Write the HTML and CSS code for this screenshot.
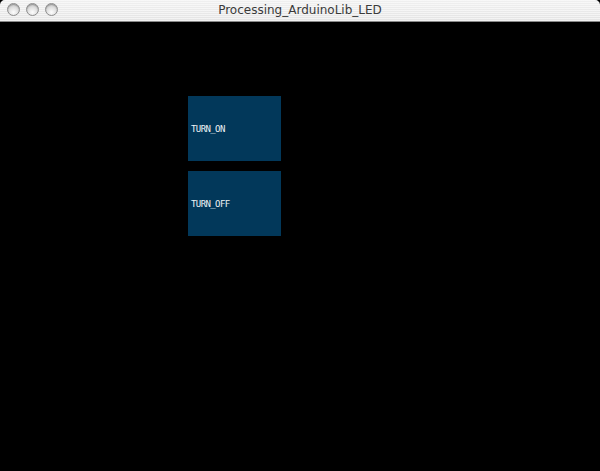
FILE: index.html
```html
<!DOCTYPE html>
<html>
<head>
<meta charset="utf-8">
<link rel="stylesheet" href="styles.css">
</head>
<body>
<div class="window">
  <div class="titlebar">
    <div class="lights">
      <span class="light"></span>
      <span class="light"></span>
      <span class="light"></span>
    </div>
    <div class="title">Processing_ArduinoLib_LED</div>
  </div>
  <div class="canvas">
    <div class="btn"><span class="label">TURN_ON</span></div>
    <div class="btn"><span class="label">TURN_OFF</span></div>
  </div>
</div>
</body>
</html>
```

FILE: styles.css
```css
html, body {
  margin: 0;
  padding: 0;
  background: #000;
}
.window {
  width: 600px;
  height: 471px;
  display: flex;
  flex-direction: column;
  overflow: hidden;
}
.titlebar {
  height: 22px;
  flex: 0 0 22px;
  position: relative;
  border-radius: 5px 5px 0 0;
  background:
    repeating-linear-gradient(to bottom, rgba(255,255,255,0.55) 0 1px, rgba(255,255,255,0) 1px 2px),
    linear-gradient(to bottom, #f0f0f0, #e4e4e4);
  border-bottom: 1px solid #8a8a8a;
  box-sizing: border-box;
  display: flex;
  align-items: center;
  justify-content: center;
}
.lights {
  position: absolute;
  left: 7px;
  top: 3px;
  display: flex;
  gap: 6px;
}
.light {
  width: 13px;
  height: 13px;
  border-radius: 50%;
  box-sizing: border-box;
  border: 1px solid #8e8e8e;
  background: radial-gradient(circle at 50% 75%, #fdfdfd 0, #e2e2e2 45%, #b9b9b9 100%);
  box-shadow: inset 0 1px 1px rgba(0,0,0,0.25);
}
.title {
  font-family: "DejaVu Sans", "Liberation Sans", sans-serif;
  font-size: 12px;
  color: #3a3a3a;
  letter-spacing: 0;
  margin-top: -1px;
}
.canvas {
  flex: 1;
  background: #000;
  display: flex;
  flex-direction: column;
  gap: 10px;
  padding: 74px 0 0 188px;
}
.btn {
  width: 93px;
  height: 65px;
  background: #02385a;
  display: flex;
  align-items: center;
  padding-left: 3px;
  box-sizing: border-box;
}
.label {
  font-family: "DejaVu Sans Mono", monospace;
  font-size: 9px;
  font-weight: normal;
  color: #eef2f5;
  letter-spacing: -0.6px;
  margin-top: 1px;
}
```
